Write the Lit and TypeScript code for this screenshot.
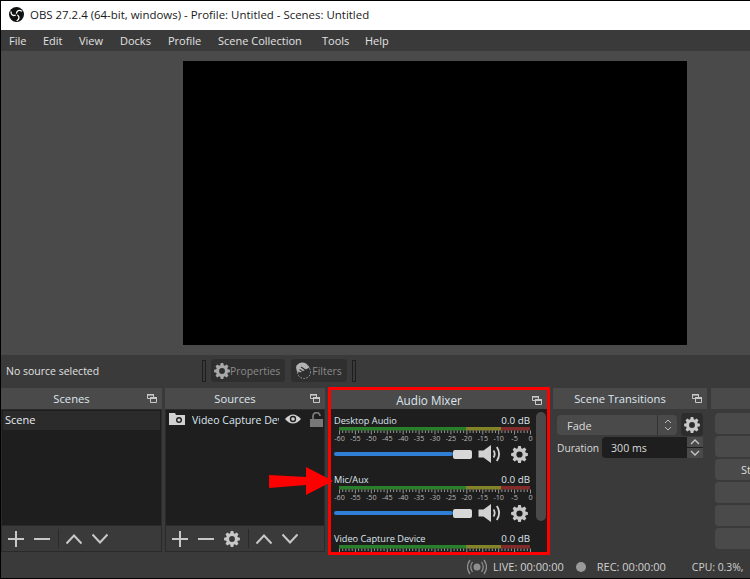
import { LitElement, html, css, svg } from "lit";
import { customElement, property } from "lit/decorators.js";

function gearPath(cx: number, cy: number, outer: number, inner: number, teeth = 8) {
  let d = "";
  const step = (Math.PI * 2) / teeth;
  for (let i = 0; i < teeth; i++) {
    const a = i * step - Math.PI / 2;
    const pts: [number, number][] = [
      [a - step * 0.38, inner],
      [a - step * 0.2, outer],
      [a + step * 0.2, outer],
      [a + step * 0.38, inner],
    ];
    for (const [ang, r] of pts) {
      const x = cx + Math.cos(ang) * r;
      const y = cy + Math.sin(ang) * r;
      d += `${d ? "L" : "M"}${x.toFixed(2)} ${y.toFixed(2)}`;
    }
  }
  return d + "Z";
}

const gear = (size: number, color = "#c8c8c8") => html`<svg width=${size} height=${size} viewBox="0 0 24 24">
  <path fill-rule="evenodd" fill=${color} d="${gearPath(12, 12, 12, 9)} M12 7.6a4.4 4.4 0 1 0 0 8.8a4.4 4.4 0 1 0 0-8.8Z"></path>
</svg>`;

const speaker = html`<svg width="24" height="20" viewBox="0 0 24 20">
  <path d="M0.5 6.5h5L13 1v18l-7.5-5.5h-5z" fill="#d2d2d2"></path>
  <path d="M15.5 6.5q2.4 3.5 0 7" fill="none" stroke="#d2d2d2" stroke-width="1.8"></path>
  <path d="M18.8 3q4.6 7 0 14" fill="none" stroke="#d2d2d2" stroke-width="1.8"></path>
</svg>`;

const plus = html`<svg width="16" height="16" viewBox="0 0 16 16"><path d="M8 0v16M0 8h16" stroke="#c8c8c8" stroke-width="2" fill="none"></path></svg>`;
const minus = html`<svg width="16" height="16" viewBox="0 0 16 16"><path d="M0 8h16" stroke="#c8c8c8" stroke-width="2" fill="none"></path></svg>`;
const up = html`<svg width="16" height="16" viewBox="0 0 16 16"><path d="M0.5 12.5L8 4.5l7.5 8" stroke="#c8c8c8" stroke-width="2" fill="none"></path></svg>`;
const down = html`<svg width="16" height="16" viewBox="0 0 16 16"><path d="M0.5 3.5L8 11.5l7.5-8" stroke="#c8c8c8" stroke-width="2" fill="none"></path></svg>`;
const dockFloat = html`<svg width="10" height="9" viewBox="0 0 10 9">
  <path d="M0.5 0.5h6v4h-6z" fill="none" stroke="#c8c8c8"></path><path d="M0 0h7v1.6H0z" fill="#c8c8c8"></path>
  <path d="M3.5 4h6v5h-6z" fill="#4a4a4a"></path><path d="M3.5 3.5h6v5h-6z" fill="none" stroke="#c8c8c8"></path><path d="M3 3h7v2H3z" fill="#c8c8c8"></path>
</svg>`;

@customElement("audio-channel")
class AudioChannel extends LitElement {
  @property() name = "";
  static styles = css`
    :host { display: block; height: 59px; flex: none; }
    .top { display: flex; justify-content: space-between; height: 14px; line-height: 16px; padding-right: 17px; font-size: 9.2px; color: #dfe6ee; }
    .db { font-size: 9.8px; }
    .meter { display: block; margin-top: 0; }
    .ctl { display: flex; align-items: center; height: 20px; margin-top: -1px; }
    .track { width: 119px; height: 4px; background: #2f7fd6; border-radius: 2px; }
    .thumb { width: 19px; height: 9px; background: #d8d8d8; border-radius: 2px; }
    .sp { margin-left: 6px; display: flex; }
    .gr { margin-left: 9px; display: flex; }
  `;
  render() {
    const x0 = 5.5;
    const step = 191 / 60;
    const ticks = [];
    for (let i = 0; i <= 60; i++) {
      const x = x0 + i * step;
      const major = i % 5 === 0;
      ticks.push(svg`<line x1=${x} x2=${x} y1="3.5" y2=${major ? 7.5 : 6} stroke="#c8c8c8" stroke-width="0.7"></line>`);
    }
    const labels = [];
    for (let i = 0; i <= 12; i++) {
      const v = i === 12 ? "0" : `-${60 - i * 5}`;
      labels.push(svg`<text x=${x0 + i * 5 * step} y="14" text-anchor="middle" font-size="7.2" fill="#b8b8b8" font-family="Open Sans, sans-serif">${v}</text>`);
    }
    return html`
      <div class="top"><span>${this.name}</span><span class="db">0.0 dB</span></div>
      <svg class="meter" width="200" height="18" viewBox="0 0 200 18">
        <rect x="5" y="0" width="127" height="3.5" fill="#2a7f2a"></rect>
        <rect x="132" y="0" width="35" height="3.5" fill="#83832a"></rect>
        <rect x="167" y="0" width="29" height="3.5" fill="#832a2a"></rect>
        ${ticks}${labels}
      </svg>
      <div class="ctl">
        <div class="track"></div><div class="thumb"></div>
        <div class="sp">${speaker}</div>
        <div class="gr">${gear(17)}</div>
      </div>
    `;
  }
}

@customElement("app-root")
class AppRoot extends LitElement {
  static styles = css`
    :host { display: block; width: 750px; height: 579px; font-family: "Open Sans", "Noto Sans", sans-serif; font-size: 11px; color: #dcdcdc; }
    * { box-sizing: border-box; }
    .win { position: relative; width: 750px; height: 579px; display: flex; flex-direction: column; background: #3a3a3a; border: 1px solid #000; border-right: none; overflow: hidden; }
    .title { height: 29px; background: #fff; color: #1a1a1a; display: flex; align-items: center; padding: 0 0 2px 8px; gap: 6px; font-size: 11.45px; flex: none; }
    .menu { height: 21px; background: #3a3a3a; display: flex; align-items: center; padding-left: 8px; gap: 0; font-size: 11px; flex: none; color: #e2e2e2; }
    .menu span { flex: none; }
    .preview { height: 304px; background: #4a4a4a; flex: none; display: flex; padding: 10px 62px 10px 182px; }
    .screen { width: 504px; height: 284px; background: #000; }
    .ctrl { height: 33px; flex: none; display: flex; align-items: center; padding: 0 0 2px 5px; font-size: 10.5px; color: #e0e0e0; }
    .ctrl .label { width: 196px; }
    .sep { width: 4px; height: 22px; border: 1px solid #1e1e1e; background: #3a3a3a; }
    .tbtn { height: 23px; background: #2f2f2f; border-radius: 4px; display: flex; align-items: center; color: #8a8a8a; padding: 0 5px 0 3px; font-size: 10.4px; margin: 0 6px 0 5px; }
    .tbtn + .tbtn { margin: 0 5px 0 0; }
    .tbtn svg { flex: none; }
    .docks { height: 167px; flex: none; display: flex; align-items: flex-start; }
    .dock { flex: none; display: flex; flex-direction: column; }
    .head { height: 21px; background: #4a4a4a; position: relative; display: flex; align-items: center; justify-content: center; font-size: 11.2px; color: #dfe6ee; padding-right: 20px; }
    .head svg { position: absolute; right: 5px; top: 6px; }
    .list { background: #1e1e1e; height: 116px; border: 1px solid #2a2a2a; border-bottom: none; }
    .tools { height: 27px; border: 1px solid #2a2a2a; background: #3a3a3a; display: flex; align-items: center; padding-left: 6px; gap: 10px; }
    .tools svg { display: block; }
    .tools .v { width: 1px; height: 19px; background: #2a2a2a; margin: 0 -3px 0 -2px; }
    .scene { height: 19px; background: #2b2b2b; padding-left: 2px; line-height: 18px; font-size: 11px; color: #e8eef4; }
    .srcrow { display: flex; align-items: center; height: 18px; padding-left: 3px; color: #dfe6ee; font-size: 10.5px; }
    .srcname { width: 87px; margin-left: 7px; padding-top: 2px; overflow: hidden; white-space: nowrap; }
    .srcrow .eye { margin-left: 6px; }
    .srcrow .lock { margin-left: 9px; }
    .mixer { width: 222px; height: 168px; border: 3px solid #f00; margin: -1px 3px 0 3px; background: #1e1e1e; }
    .mixer .head { height: 19px; font-size: 11.7px; }
    .mbody { position: relative; height: 143px; overflow: hidden; padding: 4px 0 0 3px; display: flex; flex-direction: column; }
    .scroll { position: absolute; right: 1px; top: 3px; width: 10px; height: 109px; background: #4a4a4a; border-radius: 5px; }
    .trans { padding: 4px 4px 0; display: flex; flex-direction: column; }
    .row { display: flex; align-items: center; }
    .row2 { margin-top: 1px; font-size: 10.2px; }
    .row2 > span { padding-top: 1px; }
    .combo { width: 120px; height: 20px; background: #4a4a4a; border-radius: 4px; display: flex; align-items: center; padding: 1px 0 0 10px; font-size: 11px; color: #dcdcdc; position: relative; margin-right: 4px; }
    .combo .arrows { position: absolute; right: 0; top: 0; width: 20px; height: 20px; border-left: 1px solid #333; display: flex; align-items: center; justify-content: center; }
    .gbtn { width: 22px; height: 23px; background: #2d2d2d; border-radius: 4px; display: flex; align-items: center; justify-content: center; }
    .spin { margin-left: 3px; width: 101px; height: 21px; background: #1e1e1e; border-radius: 4px; position: relative; padding-left: 9px; line-height: 23px; font-size: 10.6px; }
    .spin .b { position: absolute; right: 0; width: 16px; height: 10px; background: #4a4a4a; display: flex; align-items: center; justify-content: center; }
    .spin .b.t { top: 0; }
    .spin .b.u { bottom: 0; }
    .ctrls { width: 39px; margin-left: 4px; }
    .btns { display: flex; flex-direction: column; gap: 2px; padding: 4px 0 0 4px; }
    .btns div { height: 21px; background: #4a4a4a; border-radius: 4px; padding-left: 26px; line-height: 21px; overflow: hidden; white-space: nowrap; font-size: 11px; margin-right: -4px; }
    .status { flex: 1; display: flex; align-items: center; font-size: 11px; color: #d0d0d0; padding-left: 466px; white-space: nowrap; }
    .status .live { flex: none; margin-right: 6px; }
    .status .cpu { margin-left: 26px; font-size: 10.4px; }
    .dot { width: 10px; height: 10px; border-radius: 50%; background: #9a9a9a; margin: 0 11px 0 12px; flex: none; }
    .arrow { position: absolute; left: 266px; top: 465px; }
  `;

  render() {
    const menu: [string, number][] = [["File", 34], ["Edit", 36], ["View", 41], ["Docks", 48], ["Profile", 50], ["Scene Collection", 104], ["Tools", 43], ["Help", 30]];
    const blade = "M8 6.5C8.300 4 10.800 2.800 13.200 4.300";
    return html`<div class="win">
      <div class="title">
        <svg width="15" height="15" viewBox="0 0 16 16">
          <circle cx="8" cy="8" r="8" fill="#111"></circle>
          <g fill="none" stroke="#fff" stroke-width="1.4" stroke-linecap="round">
            <path d=${blade}></path>
            <path d=${blade} transform="rotate(120 8 8)"></path>
            <path d=${blade} transform="rotate(240 8 8)"></path>
          </g>
        </svg>
        <span>OBS 27.2.4 (64-bit, windows) - Profile: Untitled - Scenes: Untitled</span>
      </div>
      <div class="menu">${menu.map(([m, w]) => html`<span style="width:${w}px">${m}</span>`)}</div>
      <div class="preview"><div class="screen"></div></div>
      <div class="ctrl">
        <div class="label">No source selected</div>
        <div class="sep"></div>
        <div class="tbtn">${gear(16, "#a8a8a8")}<span>Properties</span></div>
        <div class="tbtn">
          <svg width="18" height="18" viewBox="0 0 18 18">
            <path d="M3 3q4-4 9-1.500l3 3q1 1-.5 1.500l-9 5q-3-1-3-3.500q-1-3 .5-4.500z" fill="#b4b4b4"></path>
            <path d="M7 5l6 4M5.500 7.500l6 4M4.500 10l5 3.500" stroke="#2f2f2f" stroke-width="1.2"></path>
            <circle cx="10" cy="10" r="6.500" fill="none" stroke="#a8a8a8" stroke-dasharray="1.5 1.5"></circle>
          </svg><span>Filters</span>
        </div>
        <div class="sep"></div>
      </div>
      <div class="docks">
        <div class="dock" style="width:161px">
          <div class="head">Scenes ${dockFloat}</div>
          <div class="list" style="padding:1px 1px 0"><div class="scene">Scene</div></div>
          <div class="tools">${plus}${minus}<span class="v"></span>${up}${down}</div>
        </div>
        <div class="dock" style="width:160px;margin-left:3px">
          <div class="head">Sources ${dockFloat}</div>
          <div class="list">
            <div class="srcrow">
              <svg width="16" height="12" viewBox="0 0 16 12"><path d="M0 0h6l1 2h9v10H0z" fill="#d2d2d2"></path><circle cx="10" cy="7" r="3" fill="#1e1e1e"></circle><circle cx="10" cy="7" r="1.600" fill="#d2d2d2"></circle></svg>
              <div class="srcname">Video Capture Device</div>
              <svg class="eye" width="16" height="12" viewBox="0 0 16 12"><path d="M0 6q8-9 16 0q-8 9-16 0z" fill="#d2d2d2"></path><circle cx="8" cy="6" r="3.200" fill="#1e1e1e"></circle><circle cx="8" cy="6" r="1.800" fill="#d2d2d2"></circle></svg>
              <svg class="lock" width="13" height="15" viewBox="0 0 13 15"><path d="M0 7h13v8H0z" fill="#787878"></path><path d="M3 7V4a3.500 3.500 0 0 1 7 0" fill="none" stroke="#787878" stroke-width="1.800"></path></svg>
            </div>
          </div>
          <div class="tools">${plus}${minus}${gear(16)}<span class="v"></span>${up}${down}</div>
        </div>
        <div class="mixer">
          <div class="head">Audio Mixer ${dockFloat}</div>
          <div class="mbody">
            <audio-channel name="Desktop Audio"></audio-channel>
            <audio-channel name="Mic/Aux"></audio-channel>
            <audio-channel name="Video Capture Device"></audio-channel>
            <div class="scroll"></div>
          </div>
        </div>
        <div class="dock" style="width:154px">
          <div class="head">Scene Transitions ${dockFloat}</div>
          <div class="trans">
            <div class="row">
              <div class="combo">Fade<div class="arrows"><svg width="8" height="14" viewBox="0 0 8 14"><path d="M1 5l3-3 3 3M1 9l3 3 3-3" fill="none" stroke="#bdbdbd"></path></svg></div></div>
              <div class="gbtn">${gear(16)}</div>
            </div>
            <div class="row row2">
              <span>Duration</span>
              <div class="spin">300 ms
                <div class="b t"><svg width="10" height="6" viewBox="0 0 10 6"><path d="M1 5l4-4 4 4" fill="none" stroke="#c8c8c8" stroke-width="1.300"></path></svg></div>
                <div class="b u"><svg width="10" height="6" viewBox="0 0 10 6"><path d="M1 1l4 4 4-4" fill="none" stroke="#c8c8c8" stroke-width="1.300"></path></svg></div>
              </div>
            </div>
          </div>
        </div>
        <div class="dock ctrls">
          <div class="head"></div>
          <div class="btns"><div></div><div></div><div>Start Streaming</div><div></div><div></div><div></div></div>
        </div>
      </div>
      <div class="status">
        <svg class="live" width="20" height="16" viewBox="0 0 20 16">
          <circle cx="10" cy="8" r="3.500" fill="#8e8e8e"></circle>
          <path d="M5.500 3q-3.500 5 0 10M14.500 3q3.500 5 0 10M3 1q-5 7 0 14M17 1q5 7 0 14" fill="none" stroke="#8e8e8e" stroke-width="1.300"></path>
        </svg>
        <span>LIVE: 00:00:00</span><div class="dot"></div><span>REC: 00:00:00</span>
        <span class="cpu">CPU: 0.3%,</span>
      </div>
      <svg class="arrow" width="68" height="32" viewBox="0 0 68 32"><path d="M2 9L39 11L39 1L66 15L39 29L39 19L2 22Z" fill="#f00"></path></svg>
    </div>`;
  }
}
